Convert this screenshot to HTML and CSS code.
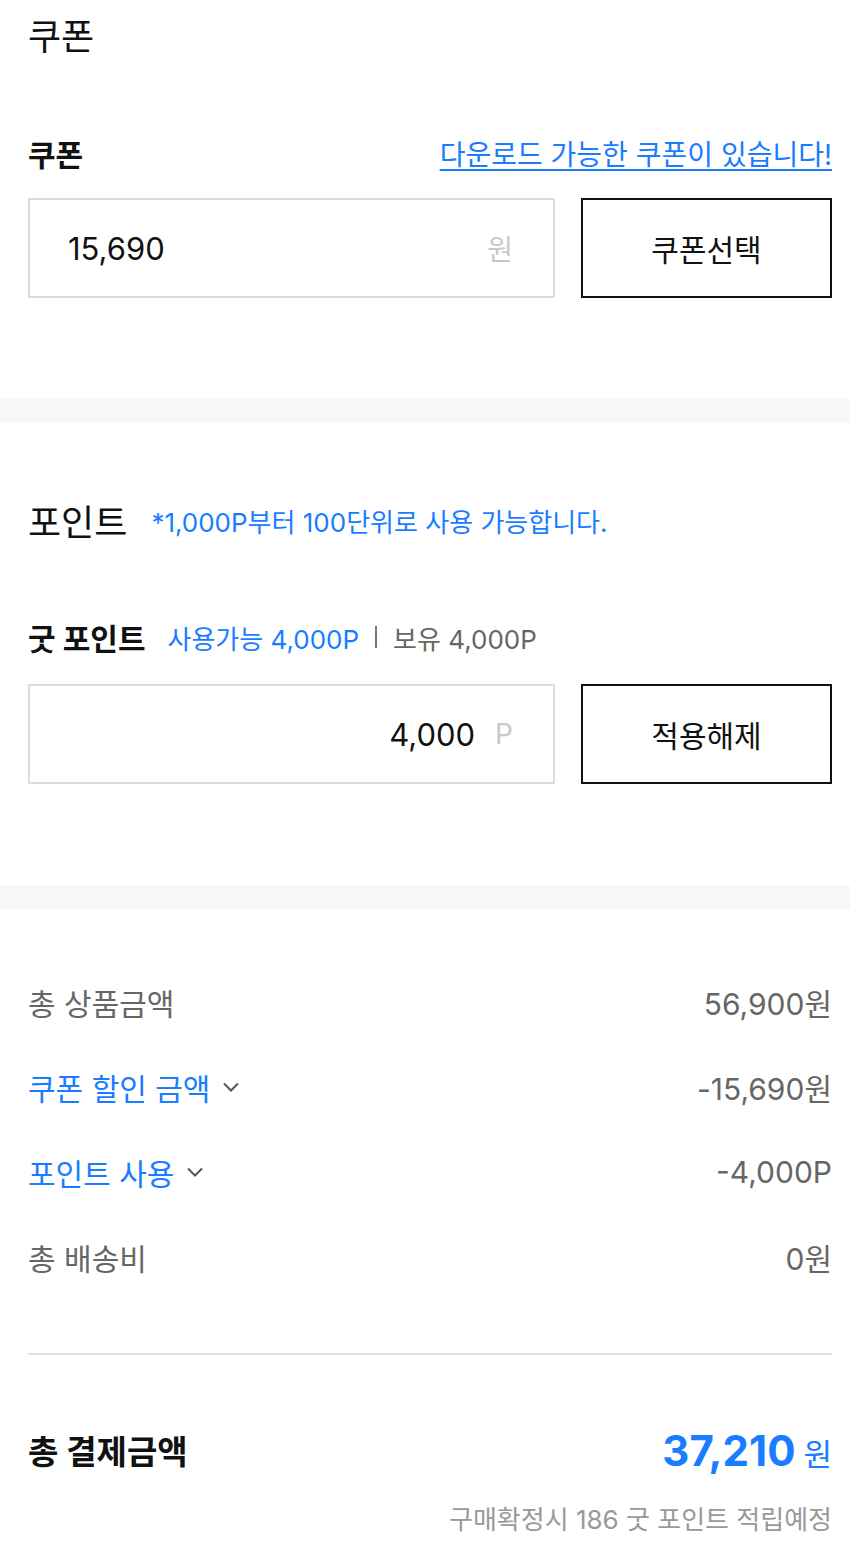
FILE: index.html
```html
<!DOCTYPE html>
<html lang="ko">

<head>
    <meta charset="UTF-8">
    <meta name="viewport" content="width=device-width, initial-scale=1.0">
    <title>쿠폰 / 포인트</title>
    <link rel="stylesheet" href="styles.css">
</head>

<body>
    <div class="page-title">쿠폰</div>

    <section class="section coupon">
        <div class="field-head">
            <span class="field-label">쿠폰</span>
            <a class="download-link" href="#">다운로드 가능한 쿠폰이 있습니다!</a>
        </div>
        <div class="field-row">
            <div class="amount-box">
                <span class="amount-value">15,690</span>
                <span class="amount-unit">원</span>
            </div>
            <button class="action-btn">쿠폰선택</button>
        </div>
    </section>

    <div class="band"></div>

    <section class="section point">
        <div class="section-title">
            포인트
            <span class="section-note">*1,000P부터 100단위로 사용 가능합니다.</span>
        </div>
        <div class="field-head field-head-left">
            <span class="field-label">굿 포인트</span>
            <span class="avail">사용가능 4,000P</span>
            <span class="bar"></span>
            <span class="owned">보유 4,000P</span>
        </div>
        <div class="field-row">
            <div class="amount-box amount-box-right">
                <span class="amount-value">4,000</span>
                <span class="amount-unit">P</span>
            </div>
            <button class="action-btn">적용해제</button>
        </div>
    </section>

    <div class="band"></div>

    <section class="summary">
        <div class="sum-row">
            <span>총 상품금액</span>
            <span>56,900원</span>
        </div>
        <div class="sum-row">
            <span class="sum-link">쿠폰 할인 금액
                <svg class="chev" width="18" height="12" viewBox="0 0 18 12"><path d="M2 2.5l7 7 7-7" fill="none" stroke="#555" stroke-width="2"/></svg>
            </span>
            <span>-15,690원</span>
        </div>
        <div class="sum-row">
            <span class="sum-link">포인트 사용
                <svg class="chev" width="18" height="12" viewBox="0 0 18 12"><path d="M2 2.5l7 7 7-7" fill="none" stroke="#555" stroke-width="2"/></svg>
            </span>
            <span>-4,000P</span>
        </div>
        <div class="sum-row">
            <span>총 배송비</span>
            <span>0원</span>
        </div>

        <div class="divider"></div>

        <div class="total-row">
            <span class="total-label">총 결제금액</span>
            <span class="total-value"><b>37,210</b><span class="total-unit">원</span></span>
        </div>
        <div class="reward-note">구매확정시 186 굿 포인트 적립예정</div>
    </section>
</body>

</html>
```

FILE: styles.css
```css
* {
    box-sizing: border-box;
}

body {
    margin: 0;
    background-color: #ffffff;
    color: #111111;
    font-family: "Inter", "Noto Sans CJK KR", "Noto Sans", sans-serif;
}

.page-title {
    height: 74px;
    line-height: 74px;
    padding: 0 28px;
    font-size: 36px;
}

.section {
    padding: 0 18px 101px 28px;
}

.field-head {
    display: flex;
    justify-content: space-between;
    align-items: center;
    height: 40px;
    margin-top: 59px;
}

.field-label {
    font-size: 30px;
    font-weight: 700;
}

.download-link {
    color: #1a7cff;
    font-size: 28px;
    text-decoration: underline;
    text-underline-offset: 4px;
}

.field-row {
    display: flex;
    gap: 26px;
    margin-top: 25px;
}

.amount-box {
    flex: 1;
    height: 100px;
    border: 2px solid #dddddd;
    display: flex;
    align-items: center;
    justify-content: space-between;
    padding: 0 40px 0 38px;
    font-size: 31px;
}

.amount-box-right {
    justify-content: flex-end;
    gap: 20px;
}

.amount-unit {
    color: #c8c8c8;
    font-size: 28px;
}

.action-btn {
    width: 251px;
    height: 100px;
    border: 2px solid #111111;
    background: #ffffff;
    color: #111111;
    font-family: inherit;
    font-size: 30px;
}

.band {
    height: 24px;
    background-color: #f8f8f8;
}

.point {
    padding-top: 77px;
}

.section-title {
    display: flex;
    align-items: center;
    height: 40px;
    font-size: 36px;
    gap: 24px;
}

.section-note {
    color: #1a7cff;
    font-size: 26px;
}

.point .field-head {
    margin-top: 77px;
}

.point .field-row {
    margin-top: 27px;
}

.field-head-left {
    justify-content: flex-start;
    gap: 0;
}

.avail {
    color: #1a7cff;
    font-size: 26px;
    margin-left: 22px;
}

.bar {
    width: 2px;
    height: 22px;
    background-color: #777777;
    margin: 0 16px;
}

.owned {
    color: #666666;
    font-size: 26px;
}

.summary {
    padding: 50px 18px 0 28px;
    color: #666666;
}

.sum-row {
    display: flex;
    justify-content: space-between;
    align-items: center;
    height: 85px;
    font-size: 30px;
}

.sum-link {
    color: #1a7cff;
    display: flex;
    align-items: center;
}

.chev {
    margin-left: 12px;
}

.divider {
    height: 2px;
    background-color: #e2e2e2;
    margin-top: 54px;
}

.total-row {
    display: flex;
    justify-content: space-between;
    align-items: center;
    height: 60px;
    margin-top: 65px;
}

.total-label {
    color: #111111;
    font-size: 33px;
    font-weight: 700;
}

.total-value {
    color: #1a7cff;
    display: flex;
    align-items: baseline;
}

.total-value b {
    font-size: 42px;
    font-weight: 700;
}

.total-unit {
    font-size: 31px;
    margin-left: 8px;
}

.reward-note {
    margin-top: 23px;
    text-align: right;
    color: #999999;
    font-size: 26px;
    line-height: 34px;
}
```
